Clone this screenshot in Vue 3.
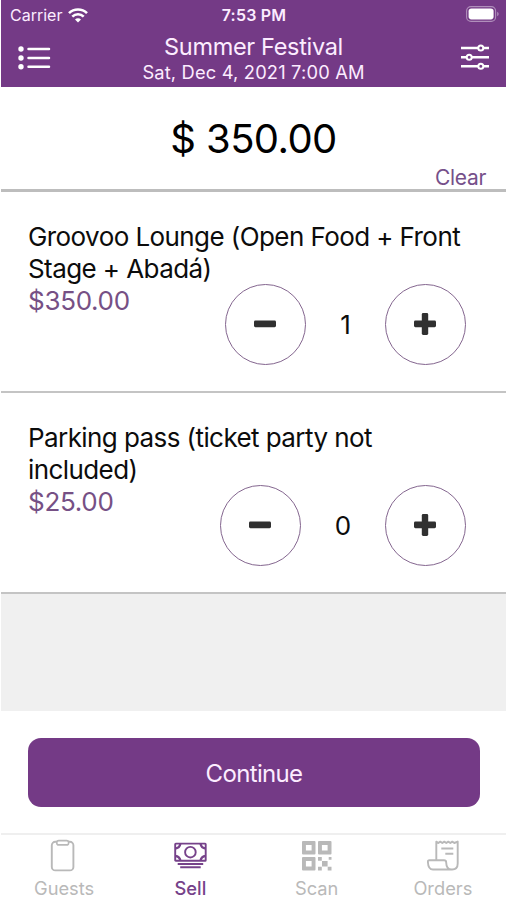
<script setup>
import { ref, computed } from 'vue'

const items = ref([
  { id: 1, title: ['Groovoo Lounge (Open Food + Front', 'Stage + Abadá)'], price: 350, qty: 1 },
  { id: 2, title: ['Parking pass (ticket party not', 'included)'], price: 25, qty: 0 },
])
const active = ref('Sell')
const tabs = ['Guests', 'Sell', 'Scan', 'Orders']
const total = computed(() => items.value.reduce((sum, i) => sum + i.price * i.qty, 0))

function clear() {
  items.value.forEach((i) => { i.qty = 0 })
}
</script>

<template>
  <div class="app">
    <header class="header">
      <div class="status">
        <div class="carrier">
          <span>Carrier</span>
          <svg width="20" height="15" viewBox="0 0 20 15" fill="none" stroke="#fff" stroke-width="2.6">
            <path d="M1 5.2a12.8 12.8 0 0 1 18 0" />
            <path d="M4.3 8.6a8.1 8.1 0 0 1 11.4 0" />
            <path d="M10 14.5l-3-3.1a4.2 4.2 0 0 1 6 0z" fill="#fff" stroke="none" />
          </svg>
        </div>
        <div class="time">7:53 PM</div>
        <svg class="battery" width="33" height="16" viewBox="0 0 33 16">
          <rect x=".6" y=".6" width="29" height="14.8" rx="4.4" fill="none" stroke="#b08fbb" stroke-width="1.1" />
          <rect x="2.6" y="2.6" width="25" height="10.8" rx="2.8" fill="#fff" />
          <path d="M31.2 5.8q1.5.7 1.5 2.2t-1.5 2.2z" fill="#b08fbb" />
        </svg>
      </div>
      <div class="navbar">
        <button class="icon-btn" aria-label="Menu">
          <svg width="33" height="24" viewBox="0 0 33 24" stroke="#fff" stroke-width="2.5" stroke-linecap="round">
            <path d="M10.5 3h20.5M10.5 12h20.5M10.5 20.7h20.5" />
            <g fill="#fff" stroke="none"><circle cx="3" cy="3" r="2.7" /><circle cx="3" cy="12" r="2.7" /><circle cx="3" cy="20.7" r="2.7" /></g>
          </svg>
        </button>
        <div class="heading">
          <h1>Summer Festival</h1>
          <p>Sat, Dec 4, 2021 7:00 AM</p>
        </div>
        <button class="icon-btn filters" aria-label="Filters">
          <svg width="28" height="26" viewBox="0 0 28 26" stroke="#fff" stroke-width="2" fill="#743a86">
            <path d="M0 4h28M0 13.2h28M0 22.2h28" stroke-width="2.4" />
            <circle cx="19.8" cy="4" r="2.5" /><circle cx="8.2" cy="13.2" r="2.5" /><circle cx="19.8" cy="22.2" r="2.5" />
          </svg>
        </button>
      </div>
    </header>

    <section class="total">
      <div class="amount">$ {{ total.toFixed(2) }}</div>
      <button class="clear" @click="clear">Clear</button>
    </section>

    <main class="list">
      <article v-for="item in items" :key="item.id" class="item">
        <h2><span v-for="line in item.title" :key="line">{{ line }}</span></h2>
        <div class="row">
          <div class="price">${{ item.price.toFixed(2) }}</div>
          <div class="stepper">
            <button class="round" aria-label="Remove one" @click="item.qty = Math.max(0, item.qty - 1)">
              <svg width="22" height="22" viewBox="0 0 22 22"><rect y="7.6" width="22" height="6.6" rx="1.4" fill="#303030" /></svg>
            </button>
            <span class="count" :class="{ one: item.qty === 1 }">{{ item.qty }}</span>
            <button class="round" aria-label="Add one" @click="item.qty++">
              <svg width="22" height="22" viewBox="0 0 22 22" fill="#303030"><rect y="7.6" width="22" height="6.6" rx="1.4" /><rect x="7.8" width="6.4" height="22" rx="1.4" /></svg>
            </button>
          </div>
        </div>
      </article>
    </main>

    <section class="action">
      <button class="continue">Continue</button>
    </section>

    <nav class="tabs">
      <button v-for="tab in tabs" :key="tab" class="tab" :class="{ active: tab === active }" @click="active = tab">
        <svg width="34" height="34" viewBox="0 0 34 34" fill="none" stroke="currentColor">
          <g v-if="tab === 'Guests'" stroke-width="1.9">
            <rect x="4.8" y="2.8" width="21.6" height="28.6" rx="3.5" />
            <rect x="9.8" y="1.6" width="11.8" height="4.3" rx="2" fill="#fff" stroke-width="1.6" />
          </g>
          <g v-else-if="tab === 'Sell'" stroke-width="1.9">
            <rect x="2.2" y="4.6" width="30.5" height="17.2" rx=".6" />
            <circle cx="17.4" cy="13.2" r="5.3" />
            <path d="M2.2 9.5q4.5-.4 5.2-4.9M2.2 17q4.5.4 5.2 4.8M32.7 9.5q-4.5-.4-5.2-4.9M32.7 17q-4.5.4-5.2 4.8" stroke-width="2.3" />
            <path d="M4.7 24.900h25.500M7.200 28.200h20.500" stroke-width="2" />
          </g>
          <g v-else-if="tab === 'Scan'" fill="currentColor" stroke="none">
            <path fill-rule="evenodd" d="M3 2h11.500a1 1 0 0 1 1 1v11.500a1 1 0 0 1-1 1H3a1 1 0 0 1-1-1V3a1 1 0 0 1 1-1zm2.900 3.900v5.700h5.700V5.900z" />
            <path fill-rule="evenodd" d="M19 2h11.500a1 1 0 0 1 1 1v11.500a1 1 0 0 1-1 1H19a1 1 0 0 1-1-1V3a1 1 0 0 1 1-1zm2.900 3.900v5.700h5.700V5.900z" />
            <path fill-rule="evenodd" d="M3 18h11.500a1 1 0 0 1 1 1v11.500a1 1 0 0 1-1 1H3a1 1 0 0 1-1-1V19a1 1 0 0 1 1-1zm2.900 3.900v5.700h5.700V21.900z" />
            <path d="M18 18h3.800v3.800H18zM28.700 18h2.800v2.800h-2.800zM22 22h5.600v5.600H22zM18 27.700h3.800v3.800H18zM27.700 27.700h3.800v3.800h-3.800z" />
          </g>
          <g v-else stroke-width="1.9" stroke-linejoin="round">
            <path d="M10.3 21V2.600l2 1.400 2-1.400 2 1.400 2-1.400 2 1.400 2-1.400 2 1.400 2-1.400 2 1.400 3.400-1.400V24.500q0 6-5.600 6H7q-4.800 0-5.100-7.500-.1-1.800 1.500-1.800H18q2.200 0 2.200 2.300.1 7 5.400 7" />
            <path d="M15.300 9.500h12M19.300 14.800h8" />
          </g>
        </svg>
        <span>{{ tab }}</span>
      </button>
    </nav>
  </div>
</template>

<style>
body { margin: 0; background: #fff; }
</style>

<style scoped>
.app { box-sizing: border-box; width: 507px; height: 900px; padding: 0 1px; display: flex; flex-direction: column; overflow: hidden; background: #fff; color: #0c0c0c; font-family: Inter, "Liberation Sans", sans-serif; }
button { margin: 0; padding: 0; border: 0; background: none; font-family: inherit; color: inherit; }
svg { display: block; flex: none; }
h1, h2, p { margin: 0; font-weight: 400; }
.header { height: 87px; background: #743a86; color: #fcecff; flex: none; }
.status { height: 30px; display: grid; grid-template-columns: 1fr auto 1fr; align-items: center; padding: 0 8px 0 9px; font-size: 16px; }
.carrier { display: flex; align-items: center; gap: 6px; }
.time { font-weight: 600; letter-spacing: .2px; }
.battery { justify-self: end; margin: -2px -1px 0 0; }
.navbar { display: flex; justify-content: space-between; height: 57px; padding: 0 15px 0 17px; }
.icon-btn { height: 56px; width: 33px; display: flex; align-items: center; justify-content: center; }
.filters { height: 54px; }
.heading { text-align: center; white-space: nowrap; padding: 3px 2px 0 0; }
.heading h1 { font-size: 23.5px; line-height: 28px; letter-spacing: -.33px; }
.heading p { font-size: 18.3px; line-height: 22px; letter-spacing: .17px; }
.total { box-sizing: border-box; height: 105px; border-bottom: 3px solid #bdbdbd; display: flex; flex-direction: column; flex: none; }
.amount { font-size: 40px; line-height: 52px; padding-top: 26px; text-align: center; color: #000; letter-spacing: -.6px; }
.clear { align-self: flex-end; margin: 1px 20px 0 0; font-size: 21px; line-height: 24px; letter-spacing: -.3px; color: #76508a; }
.list { flex: 1; background: #f0f0f0; }
.item { box-sizing: border-box; height: 201px; padding: 29px 40px 0 27px; background: #fff; border-bottom: 2px solid #c4c4c4; }
.item h2 { font-size: 26px; line-height: 32px; white-space: nowrap; letter-spacing: -.58px; }
.item h2 span { display: block; }
.row { display: flex; justify-content: space-between; }
.price { font-size: 26px; line-height: 32px; color: #765085; letter-spacing: -.3px; }
.stepper { display: flex; align-items: center; margin-top: -1px; }
.round { box-sizing: border-box; width: 81px; height: 81px; border: 1.5px solid #84668f; border-radius: 50%; display: flex; align-items: center; justify-content: center; padding: 0 2px 2px 0; }
.count { width: 84px; text-align: center; font-size: 26px; }
.count.one { width: 79px; }
.action { height: 122px; box-sizing: border-box; padding: 27px 27px 0; flex: none; }
.continue { display: block; width: 452px; height: 69px; border-radius: 13px; background: #743a86; color: #fcecff; font-size: 24px; letter-spacing: -.65px; padding-top: 2px; }
.tabs { box-sizing: border-box; height: 67px; border-top: 2px solid #efefef; display: grid; grid-template-columns: repeat(4, 1fr); flex: none; }
.tab { display: flex; flex-direction: column; align-items: center; justify-content: flex-start; gap: 3px; padding-top: 4px; color: #b9b9b9; font-size: 18.3px; line-height: 24px; }
.tab.active { color: #76428a; }
.tab.active span { font-weight: 500; }
</style>
